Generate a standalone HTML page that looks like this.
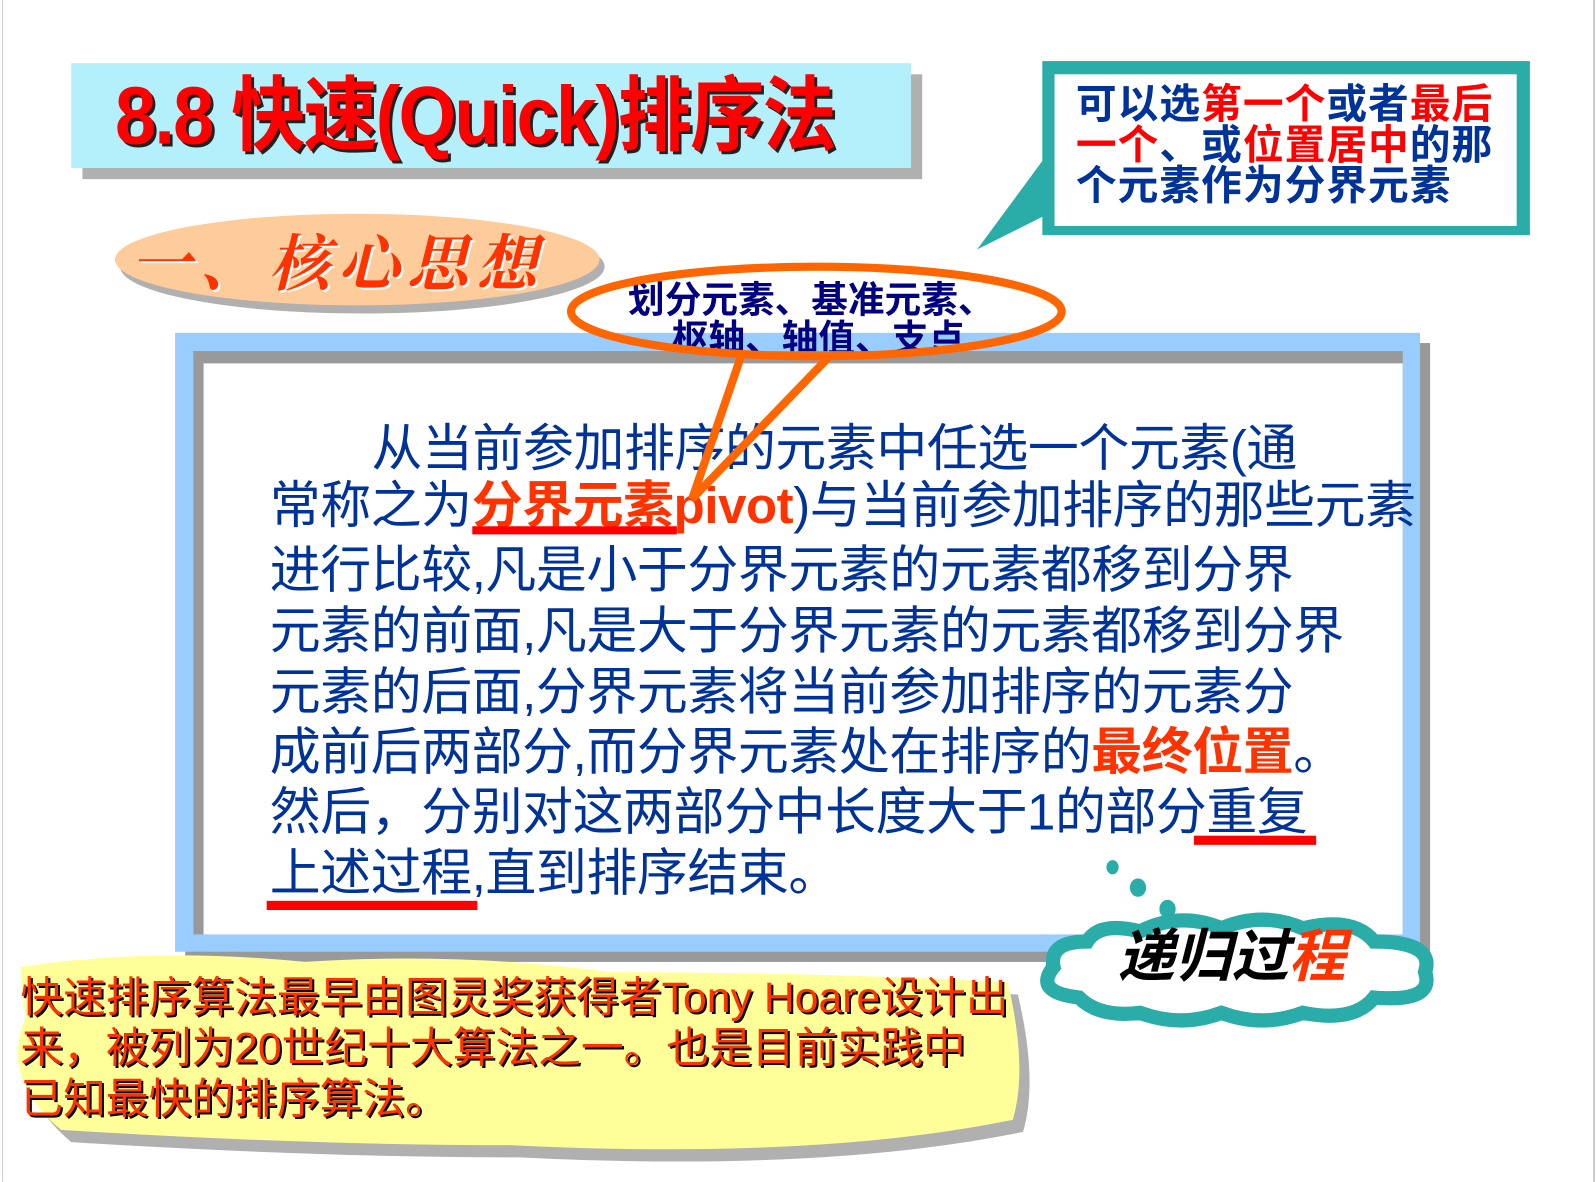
<!DOCTYPE html>
<html><head><meta charset="utf-8"><style>
html,body{margin:0;padding:0;background:#fff;width:1596px;height:1182px;overflow:hidden}
#s{position:absolute;left:0;top:0;width:1568px;height:1161px;transform:scale(1.0179);transform-origin:0 0;font-family:"Liberation Sans","Noto Sans CJK SC",sans-serif}
.a{position:absolute;white-space:nowrap}
.m{color:#003399;font-size:50px;line-height:60px;letter-spacing:-0.4px;font-family:"Liberation Sans","Noto Sans CJK SC",sans-serif}
.r{color:#ff3300;font-weight:bold}
.y{color:#ff3300;font-size:42px;text-shadow:2px 2px 0 #000}
</style></head><body><div id="s">
<div class="a" style="left:2px;top:0;width:1px;height:1161px;background:#ccc"></div>
<div class="a" style="left:1565px;top:0;width:2px;height:1161px;background:#ccc"></div>
<div class="a" style="left:81px;top:73px;width:825px;height:103px;background:#b0b0b0"></div>
<div class="a" style="left:70px;top:62px;width:825px;height:103px;background:#b3f0fb"></div>
<div class="a" style="left:113px;top:66px;font-size:80px;font-weight:bold;color:#ff0000;text-shadow:3px 3px 0 #222;letter-spacing:-2px;line-height:96px;transform:scaleX(0.91);transform-origin:0 0">8.8 快速(Quick)排序法</div>
<svg class="a" style="left:0;top:0" width="1568" height="1161">
<polygon points="1030,150 960,245 1030,210" fill="#2aaca8"/>
<ellipse cx="356" cy="262" rx="238" ry="46" fill="#b0b0b0"/>
<ellipse cx="351" cy="255" rx="238" ry="45" fill="#fecb9b"/>
</svg>
<div class="a" style="left:1024px;top:60px;width:479px;height:171px;background:#2aaca8"></div>
<div class="a" style="left:1036px;top:73px;width:454px;height:149px;background:#fff"></div>
<div class="a" style="left:1057px;top:83px;font-size:40px;font-weight:bold;line-height:40px;color:#003399;letter-spacing:1px">可以选<span style="color:#f00">第一个</span>或者<span style="color:#f00">最后</span><br><span style="color:#f00">一个</span>、或<span style="color:#f00">位置居中</span>的那<br>个元素作为分界元素</div>
<div class="a" style="left:128px;top:212px;font-size:60px;font-weight:bold;font-style:italic;color:#ff3300;text-shadow:2px 2px 0 #fff;font-family:'Noto Serif CJK SC',serif;letter-spacing:8px">一、核心思想</div>
<div class="a" style="left:182px;top:337px;width:1223px;height:608px;background:#999"></div>
<div class="a" style="left:172px;top:327px;width:1223px;height:608px;background:#99ccff"></div>
<div class="a" style="left:190px;top:345px;width:1188px;height:573px;background:#999"></div>
<div class="a" style="left:200px;top:357px;width:1178px;height:561px;background:#fff"></div>
<div class="a m" style="left:365px;top:411px">从当前参加排序的元素中任选一个元素(通</div>
<div class="a m" style="left:265px;top:467px">常称之为<span class="r">分界元素pivot</span>)与当前参加排序的那些元素</div>
<div class="a m" style="left:265px;top:530px">进行比较,凡是小于分界元素的元素都移到分界</div>
<div class="a m" style="left:265px;top:590px">元素的前面,凡是大于分界元素的元素都移到分界</div>
<div class="a m" style="left:265px;top:650px">元素的后面,分界元素将当前参加排序的元素分</div>
<div class="a m" style="left:265px;top:709px">成前后两部分,而分界元素处在排序的<span class="r">最终位置</span>。</div>
<div class="a m" style="left:265px;top:768px">然后，分别对这两部分中长度大于1的部分重复</div>
<div class="a m" style="left:265px;top:828px">上述过程,直到排序结束。</div>
<div class="a" style="left:464px;top:517px;width:201px;height:8px;background:#f00"></div>
<div class="a" style="left:1173px;top:821px;width:120px;height:9px;background:#f00"></div>
<div class="a" style="left:262px;top:885px;width:207px;height:9px;background:#f00"></div>
<div class="a" style="left:617px;top:276px;font-size:36px;font-weight:bold;color:#000080;line-height:38px">划分元素、基准元素、</div>
<div class="a" style="left:660px;top:314px;font-size:36px;font-weight:bold;color:#000080;line-height:38px">枢轴、轴值、支点</div>
<div class="a" style="left:190px;top:345px;width:1188px;height:10px;background:#999"></div>
<svg class="a" style="left:0;top:0" width="1568" height="1161">
<ellipse cx="802" cy="306" rx="241" ry="44" fill="none" stroke="#ff6600" stroke-width="8"/>
<path d="M728 350 L680 490 L815 350" fill="none" stroke="#ff6600" stroke-width="8"/>
<ellipse cx="1093" cy="852" rx="6" ry="7" fill="#2aaca8"/>
<ellipse cx="1118" cy="872" rx="8" ry="9" fill="#2aaca8"/>
<ellipse cx="1147" cy="893" rx="9" ry="10" fill="#2aaca8" stroke="#fff" stroke-width="2"/>
<path d="M1068 925 Q1080 905 1120 915 Q1160 895 1200 912 Q1240 895 1280 912 Q1330 900 1350 925 Q1410 925 1400 955 Q1410 985 1350 980 Q1330 1005 1280 995 Q1240 1010 1200 995 Q1160 1010 1120 995 Q1080 1000 1060 980 Q1015 975 1035 950 Q1030 925 1068 925 Z" fill="#fff" stroke="#2aaca8" stroke-width="14"/>
<path d="M20 950 Q150 930 300 945 Q450 935 600 955 Q800 955 990 965 Q1010 1050 995 1100 Q800 1140 500 1125 Q300 1125 60 1110 Q0 1060 25 1000 Z" fill="#b0b0b0" transform="translate(10,12)"/>
<path d="M20 950 Q150 930 300 945 Q450 935 600 955 Q800 955 990 965 Q1010 1050 995 1100 Q800 1140 500 1125 Q300 1125 60 1110 Q0 1060 25 1000 Z" fill="#ffff99"/>
</svg>
<div class="a" style="left:1098px;top:908px;font-size:56px;font-style:italic;font-weight:bold;color:#000;line-height:64px">递归过<span style="color:#ff3300">程</span></div>
<div class="a y" style="left:20px;top:955px;line-height:50px">快速排序算法最早由图灵奖获得者Tony Hoare设计出<br>来，被列为20世纪十大算法之一。也是目前实践中<br>已知最快的排序算法。</div>
</div></body></html>
